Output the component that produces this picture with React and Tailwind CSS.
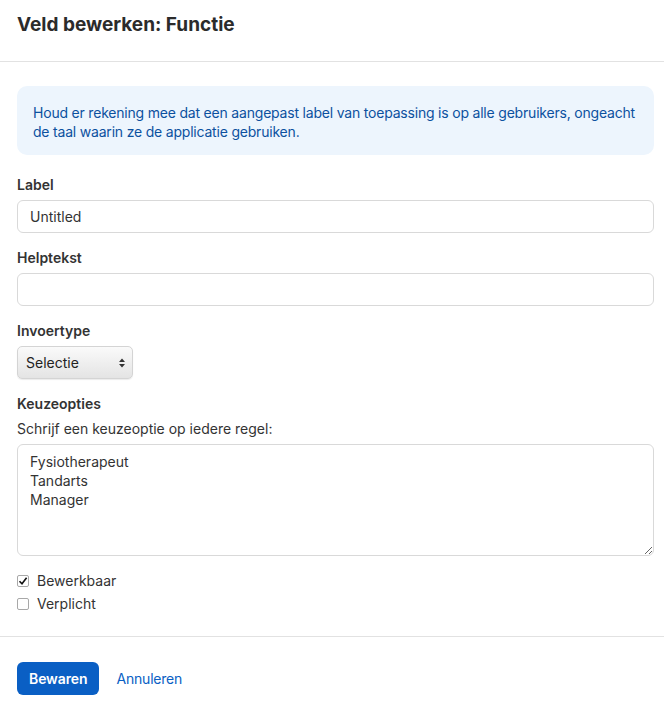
import React from 'react';

const font = { fontFamily: 'Inter, "Liberation Sans", Arial, sans-serif' };

function FieldLabel({ children }) {
  return <label className="block text-sm font-semibold text-[#333] leading-5 mb-[5px]">{children}</label>;
}

function Check({ checked, children }) {
  return (
    <label className="flex items-center gap-[8px] text-sm text-[#333] leading-[23px]">
      <span className="w-[12px] h-[12px] rounded-[2px] border border-[#a8a8a8] bg-white flex items-center justify-center">
        {checked && (
          <svg width="10" height="10" viewBox="0 0 10 10">
            <path d="M1.5 5.2 L4 7.8 L8.6 1.8" fill="none" stroke="#111" strokeWidth="1.6" />
          </svg>
        )}
      </span>
      {children}
    </label>
  );
}

export default function App() {
  return (
    <div className="bg-white w-[664px] min-h-[711px]" style={font}>
      {/* Header */}
      <div className="pl-[17px] pr-[10px] h-[62px] flex items-center border-b border-[#e2e2e2]">
        <h1 className="text-[19px] font-bold text-[#2b2b2b] -mt-[10px]">Veld bewerken: Functie</h1>
      </div>

      <div className="pl-[17px] pr-[10px] pt-[24px] pb-[21px] border-b border-[#e2e2e2]">
        {/* Info */}
        <div className="bg-[#edf5fd] rounded-[10px] pl-[16px] pr-[8px] pt-[17px] pb-[14px] text-sm leading-[19px] tracking-[-0.2px] text-[#0c519f] mb-[20px]">
          Houd er rekening mee dat een aangepast label van toepassing is op alle gebruikers, ongeacht de taal waarin ze de applicatie gebruiken.
        </div>

        <FieldLabel>Label</FieldLabel>
        <input
          defaultValue="Untitled"
          className="block w-full h-[33px] border border-[#d9d9d9] rounded-[6px] px-[12px] text-sm text-[#333] mb-[15px] outline-none"
          style={font}
        />

        <FieldLabel>Helptekst</FieldLabel>
        <input
          className="block w-full h-[33px] border border-[#d9d9d9] rounded-[6px] px-[12px] text-sm text-[#333] mb-[15px] outline-none"
          style={font}
        />

        <FieldLabel>Invoertype</FieldLabel>
        <div className="w-[116px] h-[33px] rounded-[5px] border border-[#d4d4d4] bg-gradient-to-b from-[#fafafa] to-[#e4e4e4] shadow-[0_1px_1px_rgba(0,0,0,0.08)] flex items-center justify-between pl-[8px] pr-[6px] text-sm text-[#222] mb-[15px]">
          <span>Selectie</span>
          <svg width="8" height="12" viewBox="0 0 8 12">
            <path d="M4 1.5 L7 5 L1 5 Z" fill="#333" />
            <path d="M4 10.5 L7 7 L1 7 Z" fill="#333" />
          </svg>
        </div>

        <FieldLabel>Keuzeopties</FieldLabel>
        <p className="text-sm text-[#333] leading-5 mb-[5px]">Schrijf een keuzeoptie op iedere regel:</p>
        <textarea
          defaultValue={'Fysiotherapeut\nTandarts\nManager'}
          className="w-full h-[112px] border border-[#d9d9d9] rounded-[6px] px-[12px] py-[7px] text-sm leading-[19px] text-[#333] mb-[13px] outline-none block"
          style={font}
        />

        <Check checked>Bewerkbaar</Check>
        <Check>Verplicht</Check>
      </div>

      {/* Footer */}
      <div className="pl-[17px] pt-[25px] flex items-center gap-[17px]">
        <button className="h-[33px] px-[12px] rounded-[6px] bg-[#0a5fc4] text-white text-sm font-semibold tracking-[-0.1px]" style={font}>
          Bewaren
        </button>
        <a className="text-sm text-[#0a5fc4] tracking-[-0.2px]">Annuleren</a>
      </div>
    </div>
  );
}
